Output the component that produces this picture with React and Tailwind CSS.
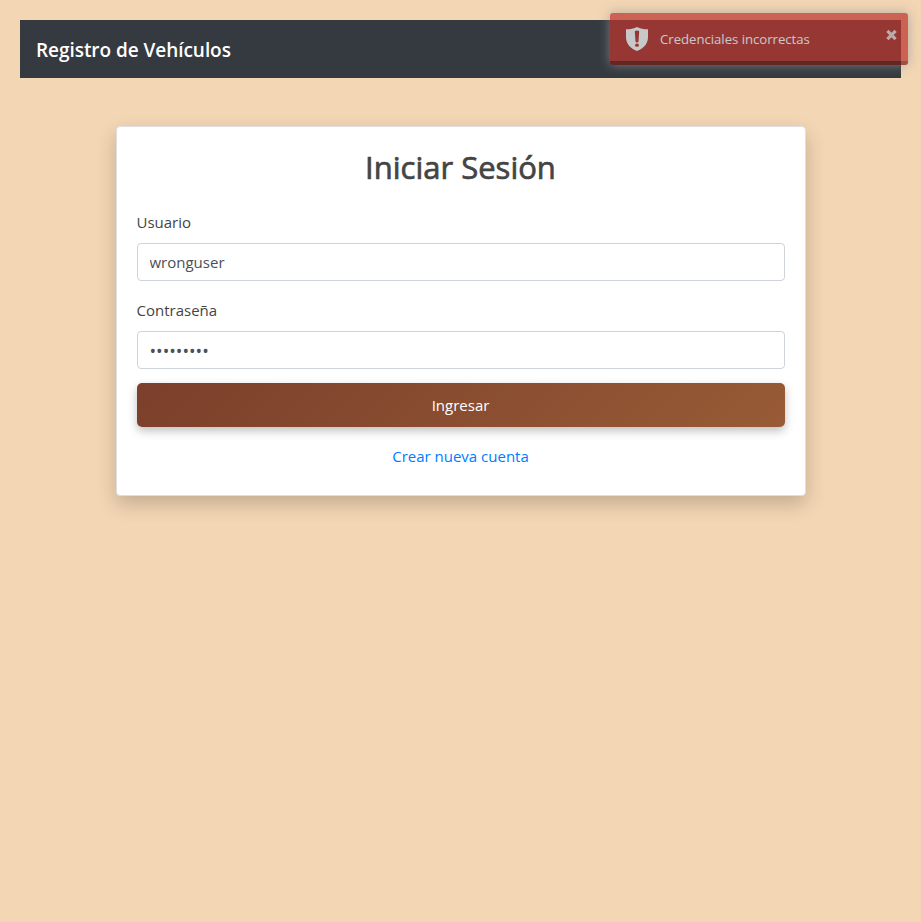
import React from "react";

function Toast() {
  return (
    <div
      role="alert"
      className="absolute left-[610px] top-[13px] h-[52px] w-[298px] overflow-visible rounded-[3px] bg-[#bd362f] opacity-[0.72] shadow-[0_0_12px_#999]"
    >
      <div className="flex h-full items-center overflow-hidden rounded-[3px] pl-4">
        <svg width="22" height="24" viewBox="0 0 22 24" className="shrink-0">
          <path
            fill="#fff"
            fillRule="evenodd"
            d="M11 0C13.8 1.8 18 2.300 22 2.300V10C22 17 17.500 21.500 11 24C4.500 21.500 0 17 0 10V2.300C4 2.300 8.200 1.800 11 0ZM8.800 4.600L9.500 14.600Q9.600 15.500 11 15.500Q12.400 15.500 12.500 14.600L13.200 4.600Q13 3.600 11 3.600Q9 3.600 8.800 4.600ZM9 18.200A2 1.600 0 1 0 13 18.200A2 1.600 0 1 0 9 18.200Z"
          />
        </svg>
        <span className="ml-3 whitespace-nowrap text-[13.2px] leading-[21px] tracking-[-0.03px] text-white">
          Credenciales incorrectas
        </span>
      </div>
      <button aria-label="Cerrar" className="absolute right-[11px] top-[16px] block opacity-80">
        <svg width="11" height="12" viewBox="0 0 11 12">
          <path d="M1.400 1.900L9.600 10.100M9.600 1.900L1.400 10.100" stroke="#fff" strokeWidth="3.200" />
        </svg>
      </button>
      <div className="absolute bottom-0 left-0 h-1 w-full rounded-b-[3px] bg-black opacity-40" />
    </div>
  );
}

export default function App() {
  return (
    <div className="relative min-h-[922px] bg-[#f3d6b4] p-5 font-['Open_Sans','Noto_Sans',sans-serif] text-[15px] leading-6 text-[#444]">
      <nav className="flex h-[58px] items-center bg-[#343a40] px-4">
        <span className="whitespace-nowrap pt-px text-[19px] font-semibold leading-[30px] tracking-[-0.05px] text-white">
          Registro de Vehículos
        </span>
      </nav>

      <main className="mx-auto mt-12 h-[370px] w-[690px] rounded border border-[#dfdfdf] bg-white px-5 pt-5 shadow-[0_8px_20px_rgba(0,0,0,0.2)]">
        <h2 className="flex h-10 items-center justify-center text-[31px] font-normal leading-[38px] text-[#444] [-webkit-text-stroke:0.7px_#444]">
          Iniciar Sesión
        </h2>
        <form className="flex flex-col">
          <label htmlFor="user" className="mt-[23px] h-6">
            Usuario
          </label>
          <input
            id="user"
            type="text"
            defaultValue="wronguser"
            className="mt-[9px] h-[38px] rounded border border-[#ced4da] bg-white px-3 text-[#495057]"
          />
          <label htmlFor="pass" className="mt-[17px] h-6">
            Contraseña
          </label>
          <input
            id="pass"
            type="password"
            defaultValue="wrongpass"
            className="mt-[9px] h-[38px] rounded border border-[#ced4da] bg-white px-3 pt-0.5 text-[17.5px] text-[#495057]"
          />
          <button
            type="button"
            className="mt-[14px] h-11 rounded-[5px] bg-[linear-gradient(135deg,#7b3f2b,#985b36)] text-white shadow-[0_4px_10px_rgba(0,0,0,0.25)]"
          >
            Ingresar
          </button>
        </form>
        <div className="mt-[17px] text-center">
          <a href="#crear" className="text-[#007bff]">
            Crear nueva cuenta
          </a>
        </div>
      </main>

      <Toast />
    </div>
  );
}
